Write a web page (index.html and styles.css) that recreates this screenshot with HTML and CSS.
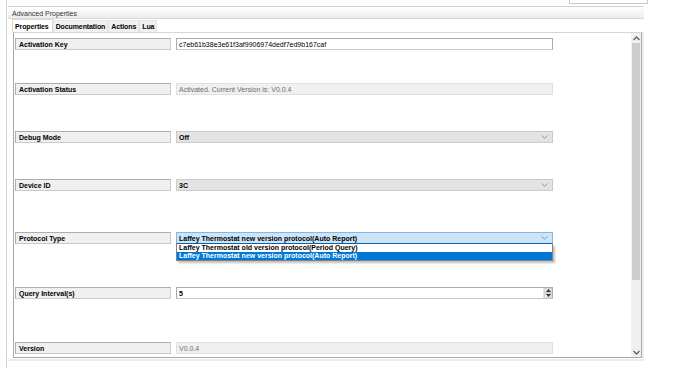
FILE: index.html
```html
<!DOCTYPE html>
<html lang="en">
<head>
    <meta charset="UTF-8">
    <title>Advanced Properties</title>
    <link rel="stylesheet" href="styles.css">
</head>
<body>
    <div class="window">
        <div class="topbar">
            <div class="search-box"></div>
        </div>

        <div class="header">Advanced Properties</div>

        <div class="tabs">
            <div class="tab active">Properties</div>
            <div class="tab">Documentation</div>
            <div class="tab">Actions</div>
            <div class="tab">Lua</div>
        </div>

        <div class="page">
            <div class="panel">
                <div class="rows">
                    <div class="row">
                        <div class="label">Activation Key</div>
                        <div class="field text">c7eb61b38e3e61f3af9906974dedf7ed9b167caf</div>
                    </div>
                    <div class="row row-2">
                        <div class="label">Activation Status</div>
                        <div class="field disabled">Activated. Current Version is: V0.0.4</div>
                    </div>
                    <div class="row row-2">
                        <div class="label">Debug Mode</div>
                        <div class="field combo">
                            <span>Off</span>
                            <svg class="chevron" width="7" height="4" viewBox="0 0 7 4"><path d="M0.5 0.5 L3.5 3.2 L6.5 0.5" fill="none" stroke="#888" stroke-width="0.8"/></svg>
                        </div>
                    </div>
                    <div class="row row-3">
                        <div class="label">Device ID</div>
                        <div class="field combo">
                            <span>3C</span>
                            <svg class="chevron" width="7" height="4" viewBox="0 0 7 4"><path d="M0.5 0.5 L3.5 3.2 L6.5 0.5" fill="none" stroke="#888" stroke-width="0.8"/></svg>
                        </div>
                    </div>
                    <div class="row row-4">
                        <div class="label">Protocol Type</div>
                        <div class="field combo focused">
                            <span>Laffey Thermostat new version protocol(Auto Report)</span>
                            <svg class="chevron" width="7" height="4" viewBox="0 0 7 4"><path d="M0.5 0.5 L3.5 3.2 L6.5 0.5" fill="none" stroke="#6a8fb5" stroke-width="0.8"/></svg>
                            <div class="dropdown">
                                <div class="option">Laffey Thermostat old version protocol(Period Query)</div>
                                <div class="option selected">Laffey Thermostat new version protocol(Auto Report)</div>
                            </div>
                        </div>
                    </div>
                    <div class="row row-4">
                        <div class="label">Query Interval(s)</div>
                        <div class="field text spin">
                            <span>5</span>
                            <div class="spinner">
                                <div class="spin-btn"><svg width="5" height="3" viewBox="0 0 5 3"><path d="M2.5 0 L5 3 L0 3 Z" fill="#333"/></svg></div>
                                <div class="spin-btn"><svg width="5" height="3" viewBox="0 0 5 3"><path d="M0 0 L5 0 L2.5 3 Z" fill="#333"/></svg></div>
                            </div>
                        </div>
                    </div>
                    <div class="row row-last">
                        <div class="label">Version</div>
                        <div class="field disabled">V0.0.4</div>
                    </div>
                </div>

                <div class="scrollbar">
                    <div class="sb-arrow">
                        <svg width="7" height="5" viewBox="0 0 7 5"><path d="M0.5 4 L3.5 1 L6.5 4" fill="none" stroke="#606060" stroke-width="1.3"/></svg>
                    </div>
                    <div class="sb-thumb"></div>
                    <div class="sb-track"></div>
                    <div class="sb-arrow">
                        <svg width="7" height="5" viewBox="0 0 7 5"><path d="M0.5 1 L3.5 4 L6.5 1" fill="none" stroke="#606060" stroke-width="1.3"/></svg>
                    </div>
                </div>
            </div>
        </div>
    </div>
</body>
</html>
```

FILE: styles.css
```css
* {
    margin: 0;
    padding: 0;
    box-sizing: border-box;
}

body {
    font-family: "Liberation Sans", Arial, sans-serif;
    font-size: 7px;
    color: #000000;
    background: #ffffff;
    width: 698px;
    height: 368px;
    overflow: hidden;
}

.window {
    margin-left: 6px;
    width: 638px;
    height: 368px;
    border-left: 1px solid #d4d4d4;
}

.topbar {
    height: 6px;
    display: flex;
    justify-content: flex-end;
}

.search-box {
    width: 79px;
    height: 4px;
    margin-right: -4px;
    border: 1px solid #c8c8c8;
    border-top: none;
}

.header {
    margin-left: 1px;
    height: 13px;
    padding: 3px 0 0 4px;
    border-top: 1px solid #cfcfcf;
    border-bottom: 1px solid #d8d8d8;
    background: linear-gradient(#ffffff, #ececec);
    color: #333333;
    line-height: 8px;
}

.tabs {
    display: flex;
    margin-left: 5px;
    height: 13px;
    padding-top: 1px;
}

.tab {
    height: 12px;
    padding: 2px 2px 0 2px;
    background: #f0f0f0;
    border: 1px solid #e4e4e4;
    border-bottom: none;
    font-weight: bold;
    line-height: 8px;
    letter-spacing: -0.1px;
}

.tab.active {
    background: #ffffff;
    margin-top: -1px;
    height: 13px;
    padding: 3px 3px 0 2px;
    border-color: #d9d9d9;
}

.page {
    width: 637px;
    height: 329px;
    border-right: 2px solid #eeeeee;
    border-bottom: 2px solid #eeeeee;
    padding-left: 6px;
}

.panel {
    width: 629px;
    height: 326px;
    border: 1px solid #a8a8a8;
    border-top-color: #d6d6d6;
    display: flex;
    overflow: hidden;
}

.rows {
    flex: 1;
    padding: 5px 0 0 1px;
}

.row {
    display: flex;
    height: 45px;
}

.row-2 { height: 48px; }
.row-3 { height: 53px; }
.row-4 { height: 55px; }
.row-last { height: 12px; }

.label {
    width: 156px;
    height: 12px;
    padding: 1px 3px;
    background: #f0f0f0;
    border: 1px solid #adadad;
    border-right-color: #c9c9c9;
    border-bottom-color: #c9c9c9;
    font-weight: bold;
    line-height: 9px;
}

.field {
    position: relative;
    width: 377px;
    height: 12px;
    margin-left: 5px;
    padding: 1px 2px;
    line-height: 9px;
    display: flex;
    align-items: center;
}

.field.text {
    background: #ffffff;
    border: 1px solid #ababab;
    border-bottom-color: #c8c8c8;
}

.field.disabled {
    background: #f0f0f0;
    border: 1px solid #e0e0e0;
    color: #6d6d6d;
}

.field.combo {
    background: #e3e3e3;
    border: 1px solid #cbcbcb;
    font-weight: bold;
}

.field.combo.focused {
    background: #cce4f7;
    border-color: #86b6e4;
    border-bottom-color: #0f5fa8;
}

.chevron {
    margin-left: auto;
    margin-right: 2px;
}

.dropdown {
    position: absolute;
    left: -1px;
    top: 11px;
    width: 377px;
    background: #ffffff;
    border: 1px solid #808080;
    border-top: none;
    box-shadow: 2px 2px 2px rgba(0, 0, 0, 0.25);
    font-weight: bold;
    z-index: 5;
}

.option {
    height: 8px;
    line-height: 8px;
    padding-left: 2px;
}

.option.selected {
    background: #0078d7;
    color: #ffffff;
}

.field.spin {
    font-weight: bold;
    padding-right: 0;
}

.spinner {
    margin-left: auto;
    width: 9px;
    height: 10px;
    display: flex;
    flex-direction: column;
    border-left: 1px solid #e2e2e2;
}

.spin-btn {
    flex: 1;
    background: #e8e8e8;
    border: 1px solid #d4d4d4;
    display: flex;
    align-items: center;
    justify-content: center;
}

.scrollbar {
    width: 10px;
    margin-left: 1px;
    display: flex;
    flex-direction: column;
    background: #f0f0f0;
}

.sb-arrow {
    height: 10px;
    display: flex;
    align-items: center;
    justify-content: center;
    background: #f0f0f0;
}

.sb-thumb {
    height: 237px;
    margin: 0 1px;
    background: #cdcdcd;
}

.sb-track {
    flex: 1;
}
```
